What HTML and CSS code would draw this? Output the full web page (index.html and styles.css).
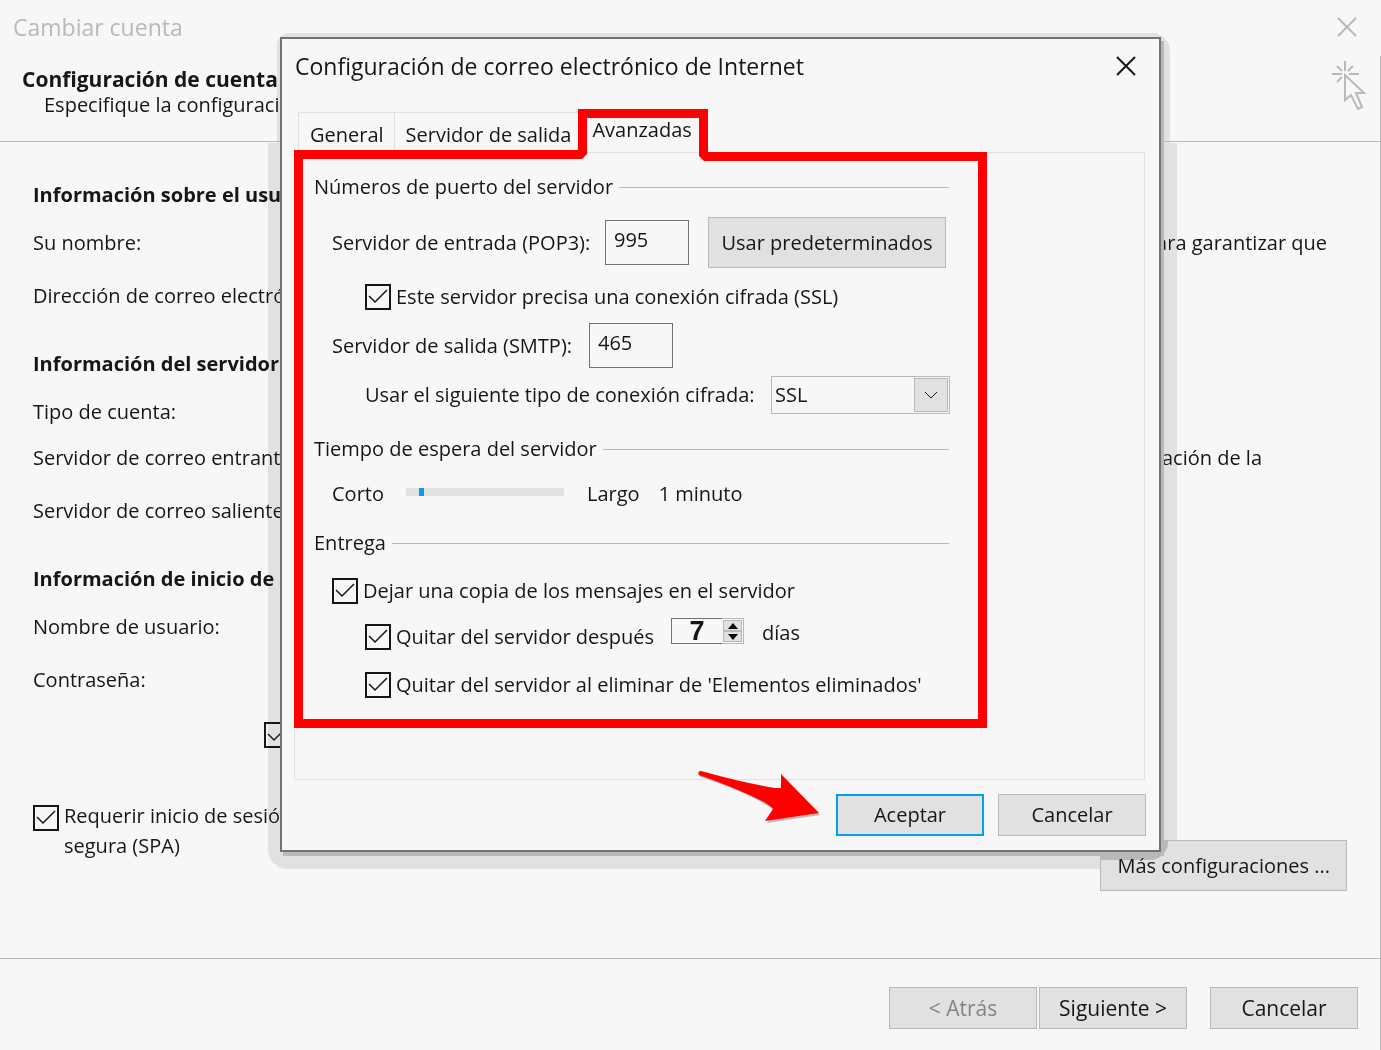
FILE: index.html
```html
<!DOCTYPE html>
<html lang="es">
<head>
  <meta charset="UTF-8"/>
  <meta name="viewport" content="width=device-width, initial-scale=1.0"/>
  <title>Cambiar cuenta</title>
  <link rel="stylesheet" href="styles.css">
</head>
<body>
  <div class="window">
    <div class="titlebar">
      <span class="window-title">Cambiar cuenta</span>
      <button class="close-btn muted" type="button" aria-label="Cerrar ventana">
        <svg width="20" height="20" viewBox="0 0 20 20"><path d="M1 1L19 19M19 1L1 19"/></svg>
      </button>
    </div>

    <div class="window-body">
      <header class="page-header">
        <div>
          <h1>Configuración de cuenta</h1>
          <p class="subtitle">Especifique la configuración</p>
        </div>
        <svg class="cursor-icon" width="34" height="50" viewBox="0 0 34 50">
          <path d="M13 0V10M0 13H10M17 13H27M5 5L10 10M21 5L16 10M5 21L10 16"/>
          <path d="M13 14V39L19 34L26 48L30 46L24 32H32Z"/>
        </svg>
      </header>

      <main class="account">
        <section class="group">
          <h2>Información sobre el usuario</h2>
          <div class="row"><span>Su nombre:</span><span class="note">para garantizar que</span></div>
          <div class="row"><span>Dirección de correo electrónico:</span></div>
        </section>

        <section class="group">
          <h2>Información del servidor</h2>
          <div class="row tight"><span>Tipo de cuenta:</span></div>
          <div class="row"><span>Servidor de correo entrante:</span><span class="note short">configuración de la</span></div>
          <div class="row"><span>Servidor de correo saliente:</span></div>
        </section>

        <section class="group">
          <h2>Información de inicio de sesión</h2>
          <div class="row"><span>Nombre de usuario:</span></div>
          <div class="row"><span>Contraseña:</span></div>
          <input class="check remember" type="checkbox" aria-label="Recordar contraseña" checked>
        </section>

        <div class="account-bottom">
          <label class="spa">
            <input class="check" type="checkbox" checked>
            <span>Requerir inicio de sesión<br>segura (SPA)</span>
          </label>
          <button class="btn large more-btn" type="button">Más configuraciones ...</button>
        </div>
      </main>

      <footer class="page-footer">
        <button class="btn" type="button" disabled>&lt; Atrás</button>
        <button class="btn" type="button">Siguiente &gt;</button>
        <button class="btn cancel" type="button">Cancelar</button>
      </footer>
    </div>
  </div>

  <div class="dialog-layer">
    <div class="shadow shadow-top"></div>
    <div class="shadow shadow-bottom"></div>
    <div class="shadow shadow-corner"></div>

    <div class="dialog" role="dialog" aria-labelledby="dialog-title">
      <div class="dialog-header">
        <h2 id="dialog-title">Configuración de correo electrónico de Internet</h2>
        <button class="close-btn" type="button" aria-label="Cerrar">
          <svg width="20" height="20" viewBox="0 0 20 20"><path d="M1 1L19 19M19 1L1 19"/></svg>
        </button>
      </div>

      <div class="tabs" role="tablist">
        <button class="tab" type="button" role="tab">General</button>
        <button class="tab" type="button" role="tab">Servidor de salida</button>
        <button class="tab active" type="button" role="tab" aria-selected="true">Avanzadas</button>
      </div>

      <form class="panel">
        <h3>Números de puerto del servidor</h3>
        <div class="field pop-row">
          <label class="pop-label" for="pop">Servidor de entrada (POP3):</label>
          <input class="port" type="text" id="pop" value="995">
          <button class="btn large defaults" type="button">Usar predeterminados</button>
        </div>
        <label class="field indent ssl-row">
          <input class="check" type="checkbox" checked>Este servidor precisa una conexión cifrada (SSL)
        </label>
        <div class="field smtp-row">
          <label class="smtp-label" for="smtp">Servidor de salida (SMTP):</label>
          <input class="port" type="text" id="smtp" value="465">
        </div>
        <div class="field indent crypt-row">
          <label class="crypt-label" for="crypt">Usar el siguiente tipo de conexión cifrada:</label>
          <div class="select">
            <select id="crypt"><option>SSL</option></select>
            <span class="select-arrow">
              <svg width="14" height="8" viewBox="0 0 14 8"><path d="M1 1L7 7L13 1"/></svg>
            </span>
          </div>
        </div>

        <h3>Tiempo de espera del servidor</h3>
        <div class="field time-row">
          <label class="time-label" for="timeout">Corto</label>
          <input class="slider" type="range" id="timeout" min="0" max="12" value="1">
          <span>Largo</span>
          <output for="timeout">1 minuto</output>
        </div>

        <h3>Entrega</h3>
        <label class="field copy-row">
          <input class="check" type="checkbox" checked>Dejar una copia de los mensajes en el servidor
        </label>
        <div class="field indent days-row">
          <label class="days-label"><input class="check" type="checkbox" checked>Quitar del servidor después</label>
          <div class="spinner">
            <input type="text" id="days" value="7" aria-label="Días">
            <div class="spin-buttons">
              <button type="button" aria-label="Más"><svg width="10" height="6" viewBox="0 0 10 6"><path d="M5 0L10 6H0Z"/></svg></button>
              <button type="button" aria-label="Menos"><svg width="10" height="6" viewBox="0 0 10 6"><path d="M5 6L10 0H0Z"/></svg></button>
            </div>
          </div>
          <label class="days-unit" for="days">días</label>
        </div>
        <label class="field indent trash-row">
          <input class="check" type="checkbox" checked>Quitar del servidor al eliminar de 'Elementos eliminados'
        </label>
      </form>

      <div class="dialog-footer">
        <button class="btn primary" type="button">Aceptar</button>
        <button class="btn" type="button">Cancelar</button>
      </div>

      <!-- Red outline around the active tab and its fields -->
      <svg class="highlight" width="694" height="620" viewBox="0 0 694 620">
        <path fill-rule="evenodd" d="M0 41H284V0H414V43H693V619H0ZM9 50V610H684V52H410L405 47V9H293V45L288 50Z"/>
      </svg>
      <svg class="arrow" width="124" height="54" viewBox="0 0 124 54">
        <path class="arrow-shade" d="M3 1Q46 16 77 18L84 18V5L122 44L69 52L76 40Q74 37 70 35Q46 20 2 6Q-1 2 3 1Z"/>
        <path d="M3 0Q46 12 77 17L83 17V3L121 42L67 50L75 38Q74 36 66 31Q36 16 1 4Q-1 0 3 0Z"/>
      </svg>
    </div>
  </div>
</body>
</html>
```
FILE: styles.css
```css
* {
  box-sizing: border-box;
  margin: 0;
  padding: 0;
}

body {
  font-family: 'Open Sans', 'Noto Sans', sans-serif;
  font-size: 20px;
  line-height: 30px;
  color: #161616;
  background: #f7f7f7;
  position: relative;
}

button,
input,
select {
  font: inherit;
  color: inherit;
}

h2,
h3 {
  font-size: 20px;
}

/* Account window */
.window {
  min-height: 100vh;
  display: flex;
  flex-direction: column;
  overflow: hidden;
}

.titlebar {
  height: 56px;
  padding: 0 24px 2px 13px;
  display: flex;
  justify-content: space-between;
  align-items: center;
}

.window-title {
  font-size: 23px;
  color: #b9b9b9;
}

.close-btn {
  width: 20px;
  height: 20px;
  border: none;
  background: none;
  display: flex;
}

.close-btn path {
  fill: none;
  stroke: #161616;
  stroke-width: 2;
}

.close-btn.muted path {
  stroke: #b9b9b9;
}

.window-body {
  flex: 1;
  display: flex;
  flex-direction: column;
  border-right: 1px solid #b9b9b9;
}

.page-header {
  height: 86px;
  padding: 10px 14px 0 22px;
  border-bottom: 1px solid #b9b9b9;
  display: flex;
  justify-content: space-between;
  align-items: flex-start;
  line-height: 26px;
}

.page-header h1 {
  font-size: 21px;
}

.subtitle {
  padding-left: 22px;
}

.cursor-icon {
  margin-top: -5px;
}

.cursor-icon path {
  fill: none;
  stroke: #b9b9b9;
  stroke-width: 2;
}

.account {
  flex: 1;
  padding: 38px 33px 0;
}

.group {
  margin-bottom: 38px;
}

.group h2 {
  margin-bottom: 18px;
}

.row {
  display: flex;
  justify-content: space-between;
  margin-bottom: 23px;
  white-space: nowrap;
}

.row:last-child {
  margin-bottom: 0;
}

.row.tight {
  margin-bottom: 16px;
}

.note {
  margin-right: 20px;
}

.note.short {
  margin-right: 85px;
}

.check {
  appearance: none;
  width: 26px;
  height: 26px;
  flex: none;
  border: 2px solid #161616;
}

.check:checked {
  background: url("data:image/svg+xml,%3Csvg xmlns='http://www.w3.org/2000/svg' viewBox='0 0 26 26'%3E%3Cpath d='M4 12L10 18L22 6' fill='none' stroke='%23161616' stroke-width='1.5'/%3E%3C/svg%3E") center / 26px no-repeat;
}

.remember {
  display: block;
  margin: 27px 0 0 231px;
}

.account-bottom {
  margin-top: 53px;
  display: flex;
  justify-content: space-between;
  align-items: flex-start;
}

.spa {
  display: flex;
  gap: 5px;
}

.spa .check {
  margin-top: 4px;
}

.more-btn {
  margin-top: 39px;
}

.page-footer {
  border-top: 1px solid #b9b9b9;
  padding: 28px 22px 21px;
  display: flex;
  justify-content: flex-end;
  gap: 2px;
  font-size: 21px;
}

.page-footer .cancel {
  margin-left: 21px;
}

.btn {
  min-width: 148px;
  height: 42px;
  background: #e1e1e1;
  border: 1px solid #b9b9b9;
}

.btn:disabled {
  color: #848484;
}

.btn.large {
  height: 51px;
  padding: 0 16px;
}

.btn.primary {
  border: 2px solid #00a2ed;
}

/* Dialog over the window */
.dialog-layer {
  position: absolute;
  top: 37px;
  left: 280px;
  right: 220px;
}

.shadow {
  position: absolute;
  background: #e1e1e1;
  mix-blend-mode: darken;
}

.shadow-top {
  top: -4px;
  left: -3px;
  right: -9px;
  height: 110px;
  border-radius: 12px 18px 0 0;
}

.shadow-bottom {
  top: 106px;
  left: -12px;
  right: -16px;
  bottom: -17px;
  border-radius: 0 0 20px 20px;
}

.shadow-corner {
  right: -7px;
  bottom: -8px;
  width: 67px;
  height: 20px;
  background: #b9b9b9;
  border-radius: 0 0 18px 0;
}

.dialog {
  position: relative;
  background: #f7f7f7;
  border: 2px solid #727272;
  box-shadow: 3px 4px 0 #b9b9b9;
  padding: 0 14px 14px 12px;
}

.dialog-header {
  height: 69px;
  padding: 0 9px 15px 1px;
  display: flex;
  justify-content: space-between;
  align-items: center;
}

.dialog-header h2 {
  font-size: 23px;
  font-weight: normal;
}

.tabs {
  height: 44px;
  padding-left: 4px;
  display: flex;
  align-items: flex-end;
}

.tab {
  height: 40px;
  padding: 4px 10px 0 11px;
  background: none;
  border: solid #e1e1e1;
  border-width: 1px 1px 0 0;
}

.tab:first-child {
  border-left-width: 1px;
}

.tab.active {
  height: 44px;
  padding: 0 10px;
  border: none;
}

.panel {
  border: 1px solid #e1e1e1;
  padding: 19px 19px 79px;
}

.panel h3 {
  max-width: 635px;
  display: flex;
  align-items: center;
  gap: 6px;
  font-weight: normal;
}

.panel h3::after {
  content: "";
  flex: 1;
  border-top: 1px solid #b9b9b9;
}

.field {
  display: flex;
  align-items: center;
  margin-left: 18px;
  white-space: nowrap;
}

.field.indent {
  margin-left: 51px;
}

.field > .check,
.days-label .check {
  margin-right: 5px;
}

.pop-row {
  margin-top: 15px;
}

.pop-label {
  width: 273px;
}

.port {
  width: 84px;
  height: 45px;
  padding: 0 8px 6px;
  background: none;
  border: 1px solid #727272;
}

.defaults {
  width: 238px;
  margin-left: 19px;
}

.btn.defaults {
  padding: 0 12px;
}

.ssl-row {
  margin-top: 14px;
}

.smtp-row {
  margin-top: 11px;
}

.smtp-label {
  width: 257px;
}

.crypt-row {
  margin: 8px 0 20px;
}

.crypt-label {
  width: 406px;
}

.select {
  position: relative;
  width: 179px;
}

.select select {
  appearance: none;
  display: block;
  width: 100%;
  height: 38px;
  padding-left: 3px;
  background: none;
  border: 1px solid #b9b9b9;
}

.select-arrow {
  position: absolute;
  top: 2px;
  right: 2px;
  bottom: 2px;
  width: 34px;
  background: #e1e1e1;
  border: 1px solid #b9b9b9;
  display: flex;
  align-items: center;
  justify-content: center;
  pointer-events: none;
}

.select-arrow path {
  fill: none;
  stroke: #161616;
}

.time-row {
  margin-top: 15px;
  margin-bottom: 19px;
}

.time-label {
  width: 74px;
}

.slider {
  appearance: none;
  width: 158px;
  height: 8px;
  margin: 0 23px 4px 0;
  background: #e1e1e1;
}

.slider::-webkit-slider-thumb {
  appearance: none;
  width: 5px;
  height: 8px;
  background: #00a2ed;
}

.time-row output {
  margin-left: 19px;
}

.copy-row {
  margin-top: 18px;
}

.days-row {
  height: 30px;
  margin-top: 16px;
}

.days-label {
  width: 306px;
  display: flex;
  align-items: center;
}

.spinner {
  width: 73px;
  height: 26px;
  margin-bottom: 12px;
  display: flex;
}

.spinner input {
  width: 51px;
  border: 1px solid #727272;
  border-right: none;
  background: none;
  font: bold 27px 'Liberation Sans', sans-serif;
  text-align: center;
}

.spin-buttons {
  flex: 1;
  padding: 1px;
  border: 1px solid #b9b9b9;
  border-left: none;
  display: flex;
  flex-direction: column;
}

.spin-buttons button {
  flex: 1;
  background: #e1e1e1;
  border: 1px solid #b9b9b9;
  display: flex;
  align-items: center;
  justify-content: center;
}

.days-unit {
  margin: 0 0 8px 18px;
}

.trash-row {
  margin-top: 18px;
}

.dialog-footer {
  padding-top: 14px;
  margin-right: -1px;
  display: flex;
  justify-content: flex-end;
  gap: 14px;
}

.highlight {
  position: absolute;
  top: 70px;
  left: 12px;
  fill: #ff0000;
  pointer-events: none;
}

.arrow {
  position: absolute;
  top: 732px;
  left: 416px;
  fill: #ff0000;
  pointer-events: none;
}

.arrow .arrow-shade {
  fill: #b9b9b9;
}
```
